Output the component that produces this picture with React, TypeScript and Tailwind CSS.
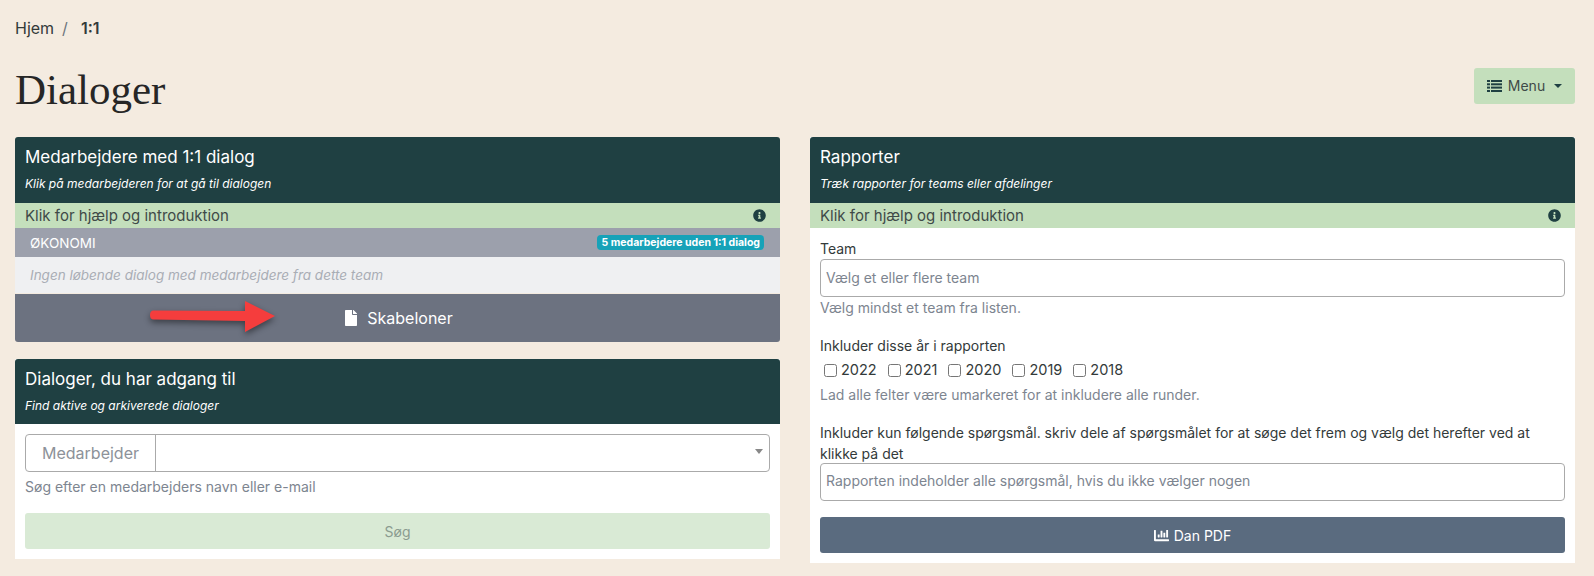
import { FaChartBar, FaFile, FaInfoCircle } from "react-icons/fa";

function CardHeader({ title, sub, className }: { title: string; sub: string; className: string }) {
  return (
    <div className={`rounded-t-[3px] bg-[#1f4042] px-2.5 pt-[8px] text-white ${className}`}>
      <h2 className="text-[17px] leading-[24px]">{title}</h2>
      <p className="mt-[6px] text-[12px] leading-[18px] italic">{sub}</p>
    </div>
  );
}

function HelpBar() {
  return (
    <div className="flex h-[25px] items-center justify-between bg-[#c4dfbc] pr-[14px] pl-[10px] text-[15px] text-[#3f4a48]">
      <span className="pt-[1px]">Klik for hjælp og introduktion</span>
      <FaInfoCircle className="size-[13px] text-[#1f4042]" />
    </div>
  );
}

const years = ["2022", "2021", "2020", "2019", "2018"];

export default function App() {
  return (
    <div className="h-[576px] overflow-hidden bg-[#f4ebe0] pr-[19px] pl-[15px] font-['Inter',sans-serif] text-[#333a3a]">
      {/* Breadcrumb */}
      <nav className="flex h-[56px] items-center pb-[1px] text-[16px]">
        <span>Hjem</span>
        <span className="mx-2 text-[#6c757d]">/</span>
        <span className="ml-[5px] font-semibold">1:1</span>
      </nav>

      {/* Title row */}
      <div className="flex h-[81px] items-start justify-between">
        <h1 className="mt-[10px] font-['Liberation_Serif',serif] text-[43px] leading-[48px] text-[#262626]">Dialoger</h1>
        <button className="mt-[12px] flex h-[36px] w-[101px] items-center justify-center rounded-[3px] bg-[#c4dfbc] pb-[1px] text-[14px] text-[#3f4a48]">
          <svg className="mr-[6px] text-[#1f4042]" width="15" height="12" viewBox="0 0 15 12" fill="currentColor">
            <rect x="0" y="0" width="3" height="2" />
            <rect x="4" y="0" width="11" height="2" />
            <rect x="0" y="3.3" width="3" height="2" />
            <rect x="4" y="3.3" width="11" height="2" />
            <rect x="0" y="6.6" width="3" height="2" />
            <rect x="4" y="6.6" width="11" height="2" />
            <rect x="0" y="10" width="3" height="2" />
            <rect x="4" y="10" width="11" height="2" />
          </svg>
          Menu
          <span className="ml-[9px] border-x-[4px] border-t-[4px] border-x-transparent border-t-[#1f4042]" />
        </button>
      </div>

      <div className="flex items-start gap-[30px]">
        {/* Left column */}
        <div className="w-[765px]">
          <section className="relative">
            <CardHeader className="h-[66px]" title="Medarbejdere med 1:1 dialog" sub="Klik på medarbejderen for at gå til dialogen" />
            <HelpBar />
            <div className="flex h-[29px] items-center justify-between bg-[#9ca0ac] pr-[16px] pl-[15px] text-[13.5px] text-white">
              <span className="pt-[1px]">ØKONOMI</span>
              <span className="rounded-[4px] bg-[#17a2b8] px-[4px] py-[1px] text-[10.5px] leading-[13px] font-bold">
                5 medarbejdere uden 1:1 dialog
              </span>
            </div>
            <div className="flex h-[36px] items-center bg-[#eff0f2] pl-[15px] text-[13.5px] text-[#a9adb5] italic">
              Ingen løbende dialog med medarbejdere fra dette team
            </div>
            <div className="mt-px flex h-[48px] items-center justify-center rounded-b-[3px] bg-[#6c7280] pl-[1px] text-[16px] text-white">
              <FaFile className="mr-[8px] size-[16px]" />
              Skabeloner
            </div>
            <svg className="absolute top-[162px] left-[133px] overflow-visible drop-shadow-[0_3px_3px_rgba(0,0,0,0.45)]" width="130" height="32" viewBox="0 0 130 32">
              <path d="M5 11.5 L97 12 L97 2 L127 17 L97 33 L97 22 L5 20.5 Q2 20 2 16 Q2 12 5 11.5 Z" fill="#f53d3d" />
            </svg>
          </section>

          <section className="mt-[17px] bg-white">
            <CardHeader className="h-[65px]" title="Dialoger, du har adgang til" sub="Find aktive og arkiverede dialoger" />
            <div className="px-2.5 pt-2.5 pb-2.5">
              <div className="relative flex h-[38px] rounded-[4px] border border-[#aaaaaa]">
                <span className="flex w-[130px] items-center justify-center border-r border-[#aaaaaa] text-[16px] text-[#8d9299]">
                  Medarbejder
                </span>
                <span className="absolute top-[14px] right-[6px] border-x-[4px] border-t-[5px] border-x-transparent border-t-[#888888]" />
              </div>
              <p className="mt-[5px] text-[14px] leading-[20px] text-[#7d8590]">Søg efter en medarbejders navn eller e-mail</p>
              <div className="mt-[16px] flex h-[36px] items-center justify-center rounded-[3px] bg-[#d9ead5] text-[14px] text-[#8b9c90]">
                Søg
              </div>
            </div>
          </section>
        </div>

        {/* Right column */}
        <section className="w-[765px] bg-white">
          <CardHeader className="h-[66px]" title="Rapporter" sub="Træk rapporter for teams eller afdelinger" />
          <HelpBar />
          <div className="px-2.5 pt-[11px] pb-2.5 text-[14px]">
            <label className="block leading-[20px]">Team</label>
            <div className="flex h-[38px] items-center rounded-[4px] border border-[#aaaaaa] pb-[2px] pl-[5px] text-[#7d8590]">
              Vælg et eller flere team
            </div>
            <p className="mt-[1px] leading-[20px] text-[#7d8590]">Vælg mindst et team fra listen.</p>

            <label className="mt-[18px] block leading-[20px]">Inkluder disse år i rapporten</label>
            <div className="mt-[4px] flex h-[20px] items-center pl-[4px]">
              {years.map((y) => (
                <span key={y} className="mr-[11px] flex items-center">
                  <input type="checkbox" className="mr-[4px] size-[13px]" />
                  <span className="text-[14.5px]">{y}</span>
                </span>
              ))}
            </div>
            <p className="mt-[5px] leading-[20px] text-[#7d8590]">Lad alle felter være umarkeret for at inkludere alle runder.</p>

            <label className="mt-[17px] block leading-[21px]">
              Inkluder kun følgende spørgsmål. skriv dele af spørgsmålet for at søge det frem og vælg det herefter ved at klikke på det
            </label>
            <div className="-mt-px flex h-[38px] items-center rounded-[4px] border border-[#aaaaaa] pb-[3px] pl-[5px] text-[#7d8590]">
              Rapporten indeholder alle spørgsmål, hvis du ikke vælger nogen
            </div>
            <button className="mt-[16px] flex h-[36px] w-full items-center justify-center rounded-[3px] bg-[#5a6b7f] text-[14px] text-white">
              <FaChartBar className="mr-[5px] size-[15px]" />
              Dan PDF
            </button>
          </div>
        </section>
      </div>
    </div>
  );
}
